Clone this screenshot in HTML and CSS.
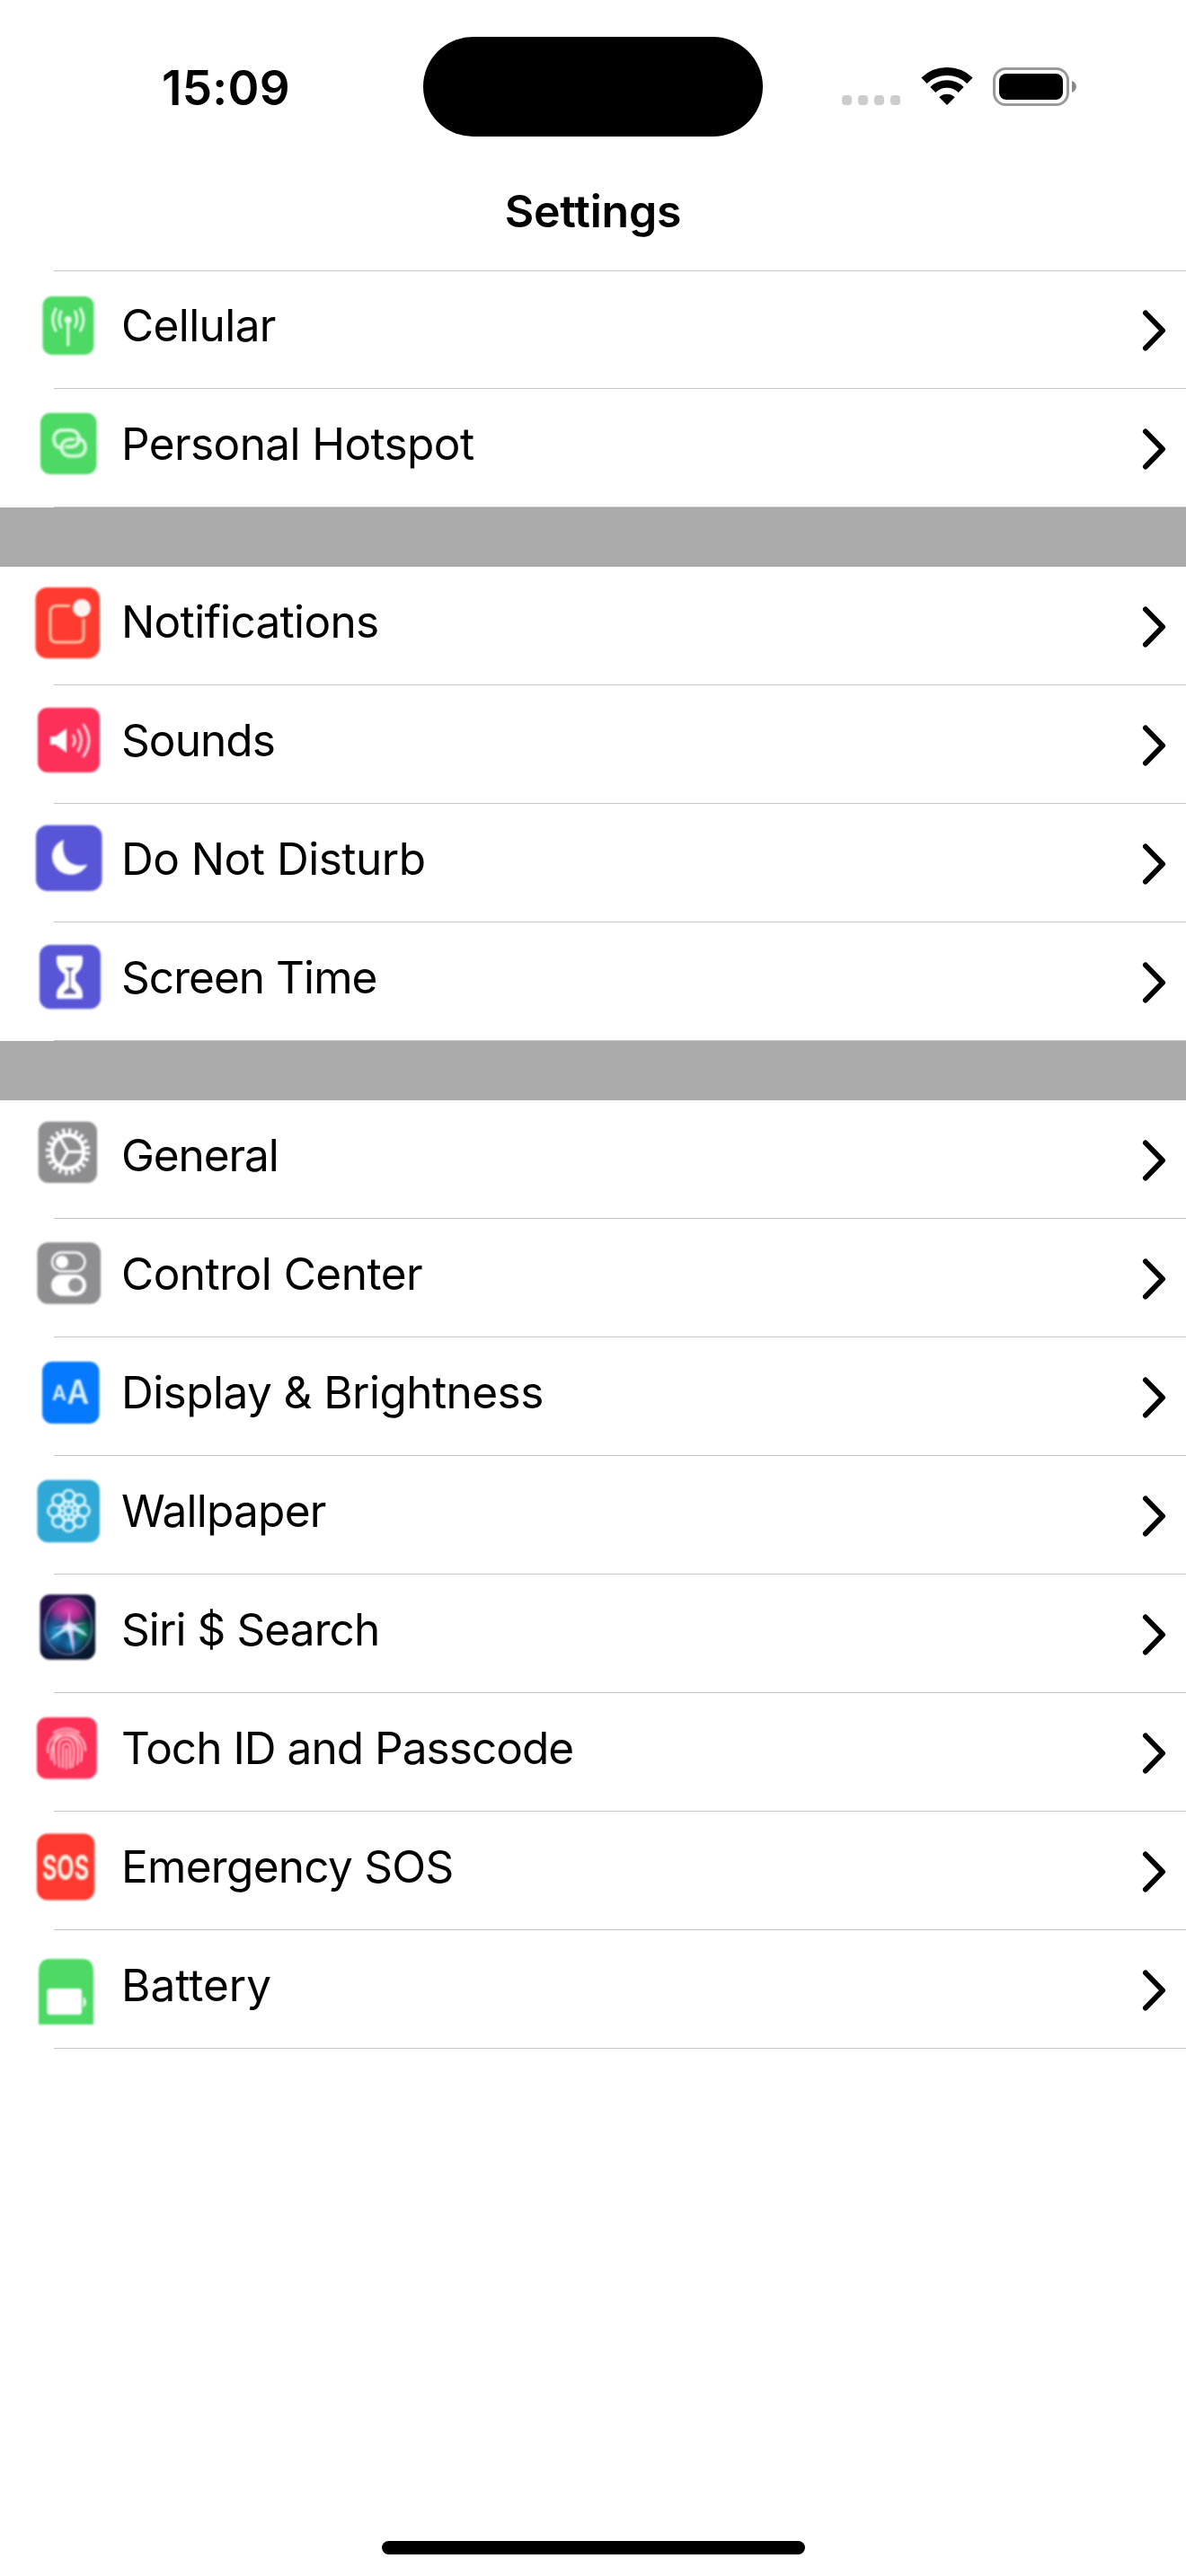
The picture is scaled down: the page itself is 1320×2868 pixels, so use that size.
FILE: index.html
```html
<!DOCTYPE html>
<html lang="en">
<head>
<meta charset="utf-8">
<title>Settings</title>
<link rel="stylesheet" href="styles.css">
</head>
<body>
<svg class="defs" width="0" height="0" aria-hidden="true">
  <symbol id="chevron" viewBox="0 0 30 50"><path d="M6 5.500 25 25 6 44.500" fill="none" stroke="#000" stroke-width="6" stroke-linecap="round" stroke-linejoin="round"/></symbol>
</svg>
<div class="screen">
  <div class="status">
    <div class="time">15:09</div>
    <div class="island"></div>
    <div class="indicators">
      <div class="dots"><i></i><i></i><i></i><i></i></div>
      <svg class="wifi" viewBox="0 0 58 43"><g fill="none" stroke="#000"><path d="M3.500 14.700a37 37 0 0 1 51 0" stroke-width="9"/><path d="M13.300 25a22.500 22.500 0 0 1 31.400 0" stroke-width="8.500"/></g><path d="M20.300 33.300a12.600 12.600 0 0 1 17.400 0L29 42z"/></svg>
      <svg class="battery" viewBox="0 0 94 43"><rect x="1.500" y="1.500" width="82" height="40" rx="13" fill="none" stroke="#999" stroke-width="3"/><rect x="7" y="7" width="71" height="29" rx="8"/><path d="M88 15c6.500 2.500 6.500 10.500 0 13z" fill="#888"/></svg>
    </div>
  </div>
  <h1 class="title">Settings</h1>
  <div class="rule"></div>

  <ul class="group">
    <li class="row">
      <svg class="icon" viewBox="30 15 90 90"><rect x="47.500" y="29" width="57" height="65" rx="10" fill="#4cd964"/><g fill="none" stroke="#d8fadd" stroke-width="3.200" stroke-linecap="round"><path d="M75.800 56v27M68 46c-2.800 5-2.800 12 0 17M83.600 46c2.800 5 2.800 12 0 17M62 43c-4.200 7.500-4.200 16.500 0 24M89.600 43c4.200 7.500 4.200 16.500 0 24"/></g><circle cx="75.800" cy="55" r="4" fill="#e4fbe7"/></svg>
      <span class="label cellular">Cellular</span>
      <svg class="chevron"><use href="#chevron"/></svg>
    </li>
    <li class="row">
      <svg class="icon" viewBox="30 15 90 90"><rect x="45" y="26.700" width="62.500" height="68.300" rx="11" fill="#4cd964"/><g fill="none" stroke="#d0f9d7" stroke-width="4" stroke-linecap="round"><path d="M69 65.500c-6 .5-9-4-9-9.500 0-6 4-10 10-10h8c6 0 10 4 10 9.500s-4 9-9 9h-5"/><path d="M86 55.500c6 0 9 4 9 9.500 0 6-4 9.800-10 9.800h-6.500c-6 0-10-4-10-9.500s4-9 9-9h4"/></g></svg>
      <span class="label hotspot">Personal Hotspot</span>
      <svg class="chevron"><use href="#chevron"/></svg>
    </li>
  </ul>

  <ul class="group">
    <li class="row">
      <svg class="icon" viewBox="30 15 90 90"><rect x="39.500" y="23" width="71.500" height="79" rx="13" fill="#ff3b30"/><path d="M78 43.500H63q-7 0-7 7V77q0 7 7 7h23q7 0 7-7V58" fill="none" stroke="#ffc2a4" stroke-width="3"/><circle cx="91" cy="46" r="10" fill="#fff3ef"/></svg>
      <span class="label notifications">Notifications</span>
      <svg class="chevron"><use href="#chevron"/></svg>
    </li>
    <li class="row">
      <svg class="icon" viewBox="30 15 90 90"><rect x="42" y="25" width="69" height="72" rx="11" fill="#fc3059"/><path d="M56 57h6l12-9v27l-12-9h-6z" fill="#fff"/><g fill="none" stroke="#ffd0d9" stroke-width="3" stroke-linecap="round"><path d="M81.500 56q3.500 5.500 0 11M87 50q7 11 0 23M93 44q12 17 0 35"/></g></svg>
      <span class="label sounds">Sounds</span>
      <svg class="chevron"><use href="#chevron"/></svg>
    </li>
    <li class="row">
      <svg class="icon" viewBox="30 15 90 90"><rect x="40" y="23.700" width="73.500" height="73.300" rx="13" fill="#5856d6"/><path d="M71 40C59 45 55 57 60.500 68 67 81 88 84 97.500 67.500 90 69.500 80 69 74.500 62 70 56 69.500 48 71 40z" fill="#fff"/></svg>
      <span class="label disturb">Do Not Disturb</span>
      <svg class="chevron"><use href="#chevron"/></svg>
    </li>
    <li class="row">
      <svg class="icon" viewBox="30 15 90 90"><rect x="44" y="25" width="68" height="71.300" rx="12" fill="#5856d6"/><path d="M65 37h25q2 0 2 2v3c0 9-4 12-8 16v7c4 5 8 8 8 16v2q0 2-2 2H65q-2 0-2-2v-2c0-8 5-11 9-16v-7c-5-4-9-8-9-16v-3q0-2 2-2z" fill="#fff"/><path d="M72.500 50.500h10l-3 3-1 1v18l6 5v2H71v-2l6-5v-18z" fill="#5f5d9e"/></svg>
      <span class="label screentime">Screen Time</span>
      <svg class="chevron"><use href="#chevron"/></svg>
    </li>
  </ul>

  <ul class="group">
    <li class="row">
      <svg class="icon" viewBox="30 15 90 90"><rect x="42.700" y="23.700" width="65.300" height="68.300" rx="11" fill="#8e8e91"/><g fill="none" stroke="#fff"><ellipse cx="75.500" cy="57.300" rx="22" ry="23.200" stroke-width="5.500" stroke-dasharray="3.200 3.898"/><ellipse cx="75.500" cy="57.300" rx="17.500" ry="18.500" stroke-width="4.400"/><path d="M75.500 57.300H93M75.500 57.300 66.500 41.500M75.500 57.300 66.500 73" stroke-width="3.200"/></g></svg>
      <span class="label general">General</span>
      <svg class="chevron"><use href="#chevron"/></svg>
    </li>
    <li class="row">
      <svg class="icon" viewBox="30 15 90 90"><rect x="41.500" y="26.300" width="70.500" height="68.500" rx="12" fill="#8e8e91"/><rect x="58" y="37.500" width="36.500" height="21" rx="10.500" fill="none" stroke="#fff" stroke-width="2.400"/><circle cx="69" cy="48" r="7" fill="#fff"/><rect x="57" y="62" width="39" height="23.700" rx="11.800" fill="#fff"/><circle cx="84" cy="73.800" r="7.800" fill="#949498"/></svg>
      <span class="label control">Control Center</span>
      <svg class="chevron"><use href="#chevron"/></svg>
    </li>
    <li class="row">
      <svg class="icon" viewBox="30 15 90 90"><rect x="47" y="27" width="63.500" height="69" rx="11" fill="#067aff"/><g class="glyph-aa"><text x="58" y="70" font-size="23" textLength="16" lengthAdjust="spacingAndGlyphs">A</text><text x="74.500" y="74" font-size="37" textLength="24.500" lengthAdjust="spacingAndGlyphs">A</text></g></svg>
      <span class="label display">Display &amp; Brightness</span>
      <svg class="chevron"><use href="#chevron"/></svg>
    </li>
    <li class="row">
      <svg class="icon" viewBox="30 15 90 90"><rect x="41.500" y="26.700" width="69.500" height="69.500" rx="12" fill="#30a8d6"/><g fill="none" stroke="#d8f6fc" stroke-width="2.700"><circle cx="76.500" cy="44.500" r="6.500"/><circle cx="88.200" cy="49.300" r="6.500"/><circle cx="93" cy="61" r="6.500"/><circle cx="88.200" cy="72.700" r="6.500"/><circle cx="76.500" cy="77.500" r="6.500"/><circle cx="64.800" cy="72.700" r="6.500"/><circle cx="60" cy="61" r="6.500"/><circle cx="64.800" cy="49.300" r="6.500"/><circle cx="76.500" cy="61" r="10.500"/><circle cx="76.500" cy="61" r="4.500"/><path d="M76.500 50.500v6M76.500 65.500v6M66 61h6M81 61h6M69 53.500l4.300 4.300M79.700 64.200l4.300 4.300M84 53.500l-4.300 4.300M73.300 64.200 69 68.500"/></g></svg>
      <span class="label wallpaper">Wallpaper</span>
      <svg class="chevron"><use href="#chevron"/></svg>
    </li>
    <li class="row">
      <svg class="icon" viewBox="30 15 90 90">
        <defs>
          <linearGradient id="night" x1="0" y1="0" x2="1" y2="1"><stop offset="0" stop-color="#341153"/><stop offset=".5" stop-color="#101638"/><stop offset="1" stop-color="#081a2c"/></linearGradient>
          <radialGradient id="pink"><stop offset="0" stop-color="#e345b2"/><stop offset=".6" stop-color="#b32d98" stop-opacity=".85"/><stop offset="1" stop-color="#6a1d7c" stop-opacity="0"/></radialGradient>
          <radialGradient id="blue"><stop offset="0" stop-color="#1aa5dc"/><stop offset="1" stop-color="#1560a8" stop-opacity="0"/></radialGradient>
          <radialGradient id="green"><stop offset="0" stop-color="#16b878"/><stop offset="1" stop-color="#0a6a58" stop-opacity="0"/></radialGradient>
          <radialGradient id="glow"><stop offset="0" stop-color="#fff"/><stop offset="1" stop-color="#cdf" stop-opacity="0"/></radialGradient>
        </defs>
        <rect x="44.600" y="22.300" width="61.500" height="72.500" rx="11" fill="url(#night)"/>
        <ellipse cx="76" cy="41" rx="25" ry="19" fill="url(#pink)"/><ellipse cx="62" cy="66" rx="20" ry="27" fill="url(#blue)"/><ellipse cx="91" cy="64" rx="16" ry="20" fill="url(#green)"/><ellipse cx="80" cy="77" rx="15" ry="15" fill="url(#blue)"/>
        <ellipse cx="76.300" cy="58.200" rx="26.300" ry="31" fill="none" stroke="#8c91b5" stroke-width="1.300" stroke-opacity=".8"/>
        <path d="M77 53 54 74q14-8 21-12l7 26q1-15-1-26l17 7q-9-11-21-16z" fill="#a8d8f4"/><path d="m79 62 3 26q1-15-1-26z" fill="#e98ad6"/><path d="M77 39l2 16 18-1-20 5-19 1 17-5z" fill="#d9b5e8" fill-opacity=".7"/><circle cx="77" cy="59" r="9" fill="url(#glow)"/>
      </svg>
      <span class="label siri">Siri $ Search</span>
      <svg class="chevron"><use href="#chevron"/></svg>
    </li>
    <li class="row">
      <svg class="icon" viewBox="30 15 90 90"><rect x="41" y="27" width="66.800" height="68.500" rx="11" fill="#fc3158"/><g fill="none" stroke="#ffc2ca" stroke-width="2.100" stroke-linecap="round"><path d="M60 44q14-9 28 0M53 66c-1-30 42-30 42-2M57 74c-3-34 35-36 34-8q0 6-1 10M61 79c-3-30-1-32 13-32 14 1 14 14 12 32M66 82c-2-26-1-31 8-31 10 1 9 14 7 31M70 83V61c0-6 8-6 8 0v22M74 62v22"/></g></svg>
      <span class="label touch">Toch ID and Passcode</span>
      <svg class="chevron"><use href="#chevron"/></svg>
    </li>
    <li class="row">
      <svg class="icon" viewBox="30 15 90 90"><rect x="41" y="24.500" width="64.300" height="74" rx="12" fill="#ff3830"/><text class="glyph-sos" x="47" y="76" font-size="38" textLength="52" lengthAdjust="spacingAndGlyphs">SOS</text></svg>
      <span class="label sos">Emergency SOS</span>
      <svg class="chevron"><use href="#chevron"/></svg>
    </li>
    <li class="row">
      <svg class="icon" viewBox="30 15 90 90"><path d="M43 105V47q0-15 12-15h37q12 0 12 15v58z" fill="#4cd964"/><rect x="52.500" y="65" width="38.500" height="29" rx="3" fill="#fff"/><path d="M92.500 74q3.500 2 3.500 6t-3.500 6z" fill="#e6fce9"/></svg>
      <span class="label power">Battery</span>
      <svg class="chevron"><use href="#chevron"/></svg>
    </li>
  </ul>
  <div class="home"></div>
</div>
</body>
</html>
```
FILE: styles.css
```css
* { box-sizing: border-box; }
body { margin: 0; background: #fff; color: #000; font-family: Inter, "Liberation Sans", sans-serif; }
.defs { display: block; height: 0; }
.screen { display: flex; flex-direction: column; width: 1320px; height: 2868px; overflow: hidden; }

.status { display: flex; height: 152px; padding-top: 41px; }
.time { width: 471px; padding: 25px 0 0 180px; font-size: 53px; line-height: 64px; font-weight: 600; letter-spacing: 0.3px; }
.island { width: 378px; height: 111px; border-radius: 56px; background: #000; }
.indicators { display: flex; padding: 34px 0 0 88px; }
.dots { display: flex; gap: 7px; width: 88px; padding-top: 31px; }
.dots i { width: 11px; height: 11px; border-radius: 4px; background: #ccc; }
.wifi { width: 58px; height: 43px; margin-right: 22px; }
.battery { width: 94px; height: 43px; }

.title { height: 149px; margin: 0; padding-top: 53px; text-align: center; font-size: 50px; line-height: 60px; font-weight: 600; letter-spacing: -0.2px; }
.rule { flex: none; height: 1px; margin: 0 0 -1px 60px; background: #c6c6c8; }

.group { margin: 0; padding: 0; list-style: none; }
.group + .group { border-top: 66px solid #aaa; }
.row { display: flex; height: 132px; padding: 15px 21px 0 30px;
  background: linear-gradient(#c6c6c8, #c6c6c8) 60px 131px / 1260px 1px no-repeat; }
.icon { flex: none; width: 90px; height: 90px; margin-right: 15px; filter: blur(0.8px); }
.label { flex: 1; padding-top: 16px; font-size: 49.500px; line-height: 60px; white-space: nowrap; }
.chevron { width: 30px; height: 50px; margin-top: 27px; }

/* Tracking per label */
.cellular { letter-spacing: -0.6px; }
.hotspot { letter-spacing: -0.6px; }
.notifications { letter-spacing: -0.68px; }
.sounds { letter-spacing: -0.9px; }
.disturb { letter-spacing: -0.5px; }
.screentime { letter-spacing: -0.95px; }
.general { letter-spacing: -1.1px; }
.control { letter-spacing: -0.5px; }
.display { letter-spacing: -0.55px; }
.wallpaper { letter-spacing: -0.75px; }
.siri { letter-spacing: -0.9px; }
.touch { letter-spacing: -0.95px; }
.sos { letter-spacing: -0.7px; }

.glyph-aa { fill: #d9f0ff; font-family: Inter, sans-serif; font-weight: 600; }
.glyph-sos { fill: #fff1e4; font-family: Inter, sans-serif; font-weight: 700; }

.home { width: 471px; height: 15px; margin: auto auto 24px 425px; border-radius: 8px; background: #000; }
```
